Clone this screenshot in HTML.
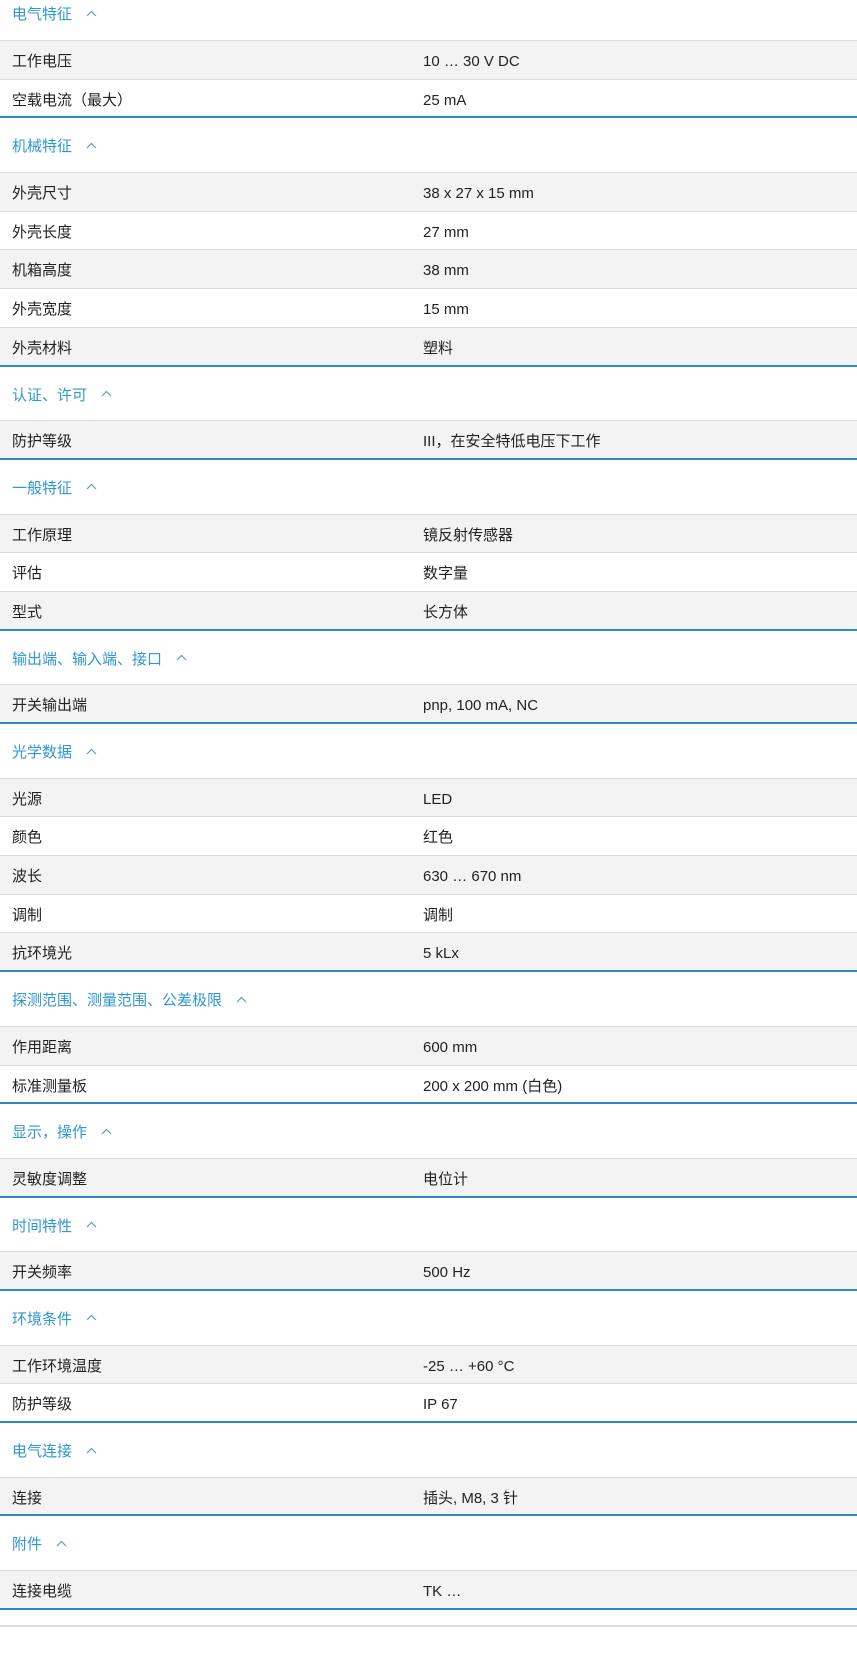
<!DOCTYPE html>
<html><head><meta charset="utf-8"><style>
*{margin:0;padding:0;box-sizing:border-box}
body{width:857px;height:1663px;background:#fff;font-family:"Liberation Sans","Noto Sans CJK SC",sans-serif;font-size:15px;color:#222;overflow:hidden}
.h{height:54.7px;line-height:58px;border-bottom:1px solid #dcdcdc;color:#2f97d1;padding-left:12px;white-space:nowrap;overflow:hidden}
.h.first{height:41px;line-height:29px}
.h svg{margin-left:14px;vertical-align:middle;position:relative;top:-2px}
.r{height:38.7px;line-height:41px;border-bottom:1px solid #dcdcdc;padding-left:12px;white-space:nowrap;overflow:hidden}
.g{background:#f3f3f3}
.r.last{border-bottom:2px solid #2a8cc4}
.r span{display:inline-block;width:411px;vertical-align:baseline}
.end{height:17px;border-bottom:2px solid #dedede}
</style></head><body>
<div id="c"></div>
<script>
var d=[["电气特征",[["工作电压","10 … 30 V DC"],["空载电流（最大）","25 mA"]]],
["机械特征",[["外壳尺寸","38 x 27 x 15 mm"],["外壳长度","27 mm"],["机箱高度","38 mm"],["外壳宽度","15 mm"],["外壳材料","塑料"]]],
["认证、许可",[["防护等级","III，在安全特低电压下工作"]]],
["一般特征",[["工作原理","镜反射传感器"],["评估","数字量"],["型式","长方体"]]],
["输出端、输入端、接口",[["开关输出端","pnp, 100 mA, NC"]]],
["光学数据",[["光源","LED"],["颜色","红色"],["波长","630 … 670 nm"],["调制","调制"],["抗环境光","5 kLx"]]],
["探测范围、测量范围、公差极限",[["作用距离","600 mm"],["标准测量板","200 x 200 mm (白色)"]]],
["显示，操作",[["灵敏度调整","电位计"]]],
["时间特性",[["开关频率","500 Hz"]]],
["环境条件",[["工作环境温度","-25 … +60 °C"],["防护等级","IP 67"]]],
["电气连接",[["连接","插头, M8, 3 针"]]],
["附件",[["连接电缆","TK …"]]]];
var chev='<svg width="11" height="7" viewBox="0 0 11 7"><path d="M1 6L5.5 1.5L10 6" fill="none" stroke="#5a9cc8" stroke-width="1.2"/></svg>';
var h='';
d.forEach(function(s,i){
h+='<div class="h'+(i==0?' first':'')+'">'+s[0]+chev+'</div>';
s[1].forEach(function(r,j){
h+='<div class="r'+(j%2==0?' g':'')+(j==s[1].length-1?' last':'')+'"><span>'+r[0]+'</span><span>'+r[1]+'</span></div>';
});
});
h+='<div class="end"></div>';
document.getElementById('c').innerHTML=h;
</script>
</body></html>
